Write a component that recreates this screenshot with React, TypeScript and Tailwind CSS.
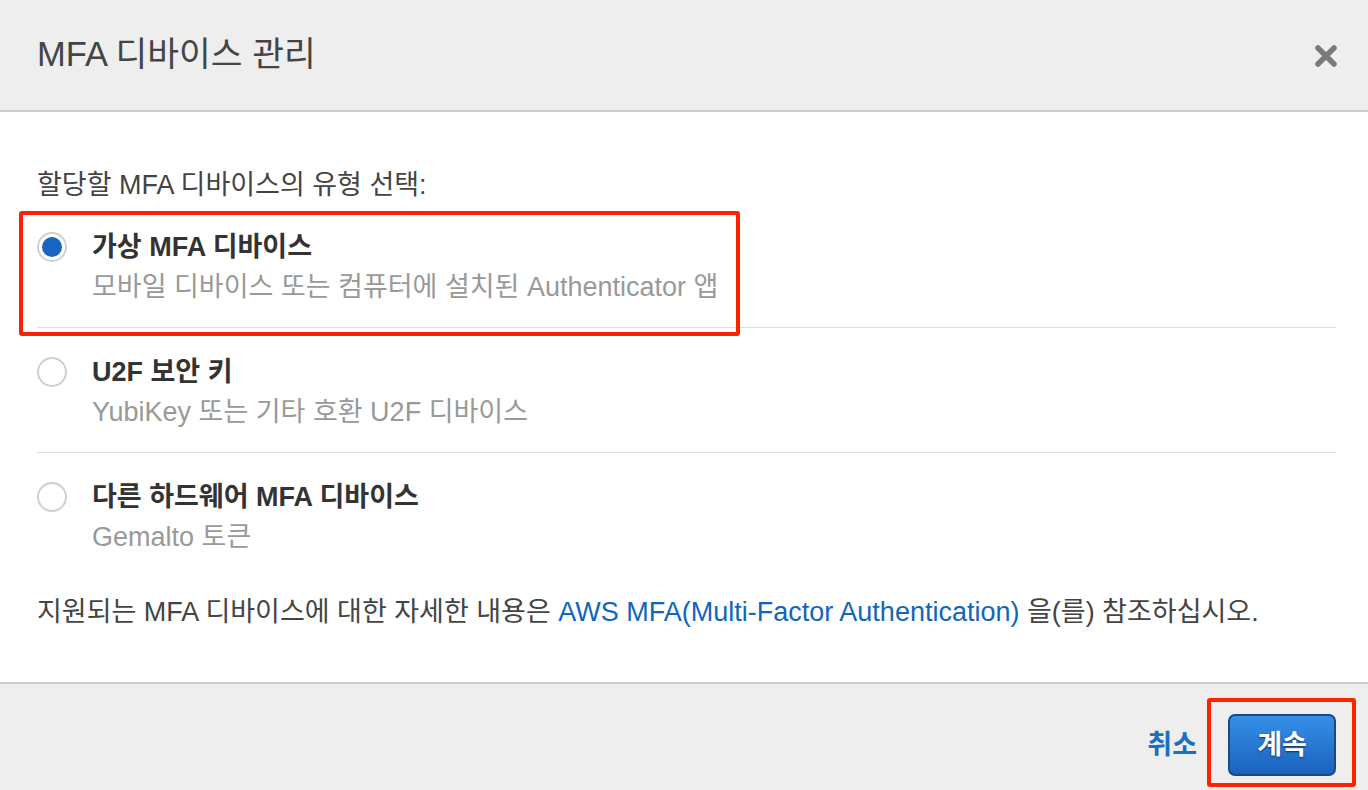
import React from "react";

const FONT = '"Liberation Sans", "Noto Sans CJK KR", Arial, sans-serif';

function Radio({ checked }: { checked?: boolean }) {
  return (
    <div className="w-[30px] h-[30px] rounded-full border-2 border-[#cfcfcf] bg-white flex items-center justify-center shrink-0">
      {checked && <div className="w-[20px] h-[20px] rounded-full bg-[#1666c1]" />}
    </div>
  );
}

function Option({
  title,
  sub,
  checked,
  last,
}: {
  title: React.ReactNode;
  sub: string;
  checked?: boolean;
  last?: boolean;
}) {
  return (
    <div className={`flex pt-[24px] pb-[20px] ${last ? "" : "border-b border-[#dddddd]"}`}>
      <div className="h-[40px] flex items-center">
        <Radio checked={checked} />
      </div>
      <div className="ml-[25px] flex flex-col">
        <div className="h-[40px] flex items-center text-[27px] font-bold text-[#333333]">{title}</div>
        <div className="h-[40px] flex items-center text-[27px] text-[#999999]">{sub}</div>
      </div>
    </div>
  );
}

export default function App() {
  return (
    <div
      className="relative w-[1368px] h-[790px] bg-white flex flex-col overflow-hidden"
      style={{ fontFamily: FONT }}
    >
      <div className="h-[112px] shrink-0 bg-[#eeeeee] border-b-2 border-[#cccccc] flex items-center justify-between pl-[37px] pr-[31px]">
        <div className="text-[34.5px] text-[#444444] leading-none pb-[2px]">MFA 디바이스 관리</div>
        <svg width="22" height="22" viewBox="0 0 22 22" className="mt-[1px]">
          <path d="M3 3 L19 19 M19 3 L3 19" stroke="#7a7a7a" strokeWidth="5.5" strokeLinecap="round" />
        </svg>
      </div>

      <div className="flex-1 pl-[37px] pr-[32px] pt-[57px] text-[#444444]">
        <div className="h-[32px] flex items-center text-[27px]">할당할 MFA 디바이스의 유형 선택:</div>
        <div className="mt-[2px] flex flex-col">
          <Option checked title="가상 MFA 디바이스" sub="모바일 디바이스 또는 컴퓨터에 설치된 Authenticator 앱" />
          <Option title="U2F 보안 키" sub="YubiKey 또는 기타 호환 U2F 디바이스" />
          <Option last title="다른 하드웨어 MFA 디바이스" sub="Gemalto 토큰" />
        </div>
        <div className="mt-[19px] h-[32px] flex items-center text-[27px] text-[#444444] whitespace-nowrap">
          지원되는 MFA 디바이스에 대한 자세한 내용은&nbsp;
          <span className="text-[#1166bb]">AWS MFA(Multi-Factor Authentication)</span>
          &nbsp;을(를) 참조하십시오.
        </div>
      </div>

      <div className="h-[108px] shrink-0 bg-[#eeeeee] border-t-2 border-[#cccccc] flex items-start justify-end pr-[32px] pt-[30px]">
        <div className="h-[62px] flex items-center text-[27px] font-bold text-[#1a6fc0] mr-[31px]">취소</div>
        <button
          className="w-[108px] h-[62px] rounded-[7px] border-2 border-[#174a86] bg-gradient-to-b from-[#3690e8] to-[#1a62bd] text-white text-[27px] font-bold flex items-center justify-center"
          style={{ textShadow: "0 1px 2px rgba(0,0,0,0.6)", fontFamily: FONT }}
        >
          계속
        </button>
      </div>

      <div className="absolute left-[19px] top-[211px] w-[721px] h-[125px] border-[4px] border-[#ff2200] rounded-[3px] pointer-events-none" />
      <div className="absolute left-[1207px] top-[698px] w-[149px] h-[89px] border-[4px] border-[#ff2200] rounded-[3px] pointer-events-none" />
    </div>
  );
}
